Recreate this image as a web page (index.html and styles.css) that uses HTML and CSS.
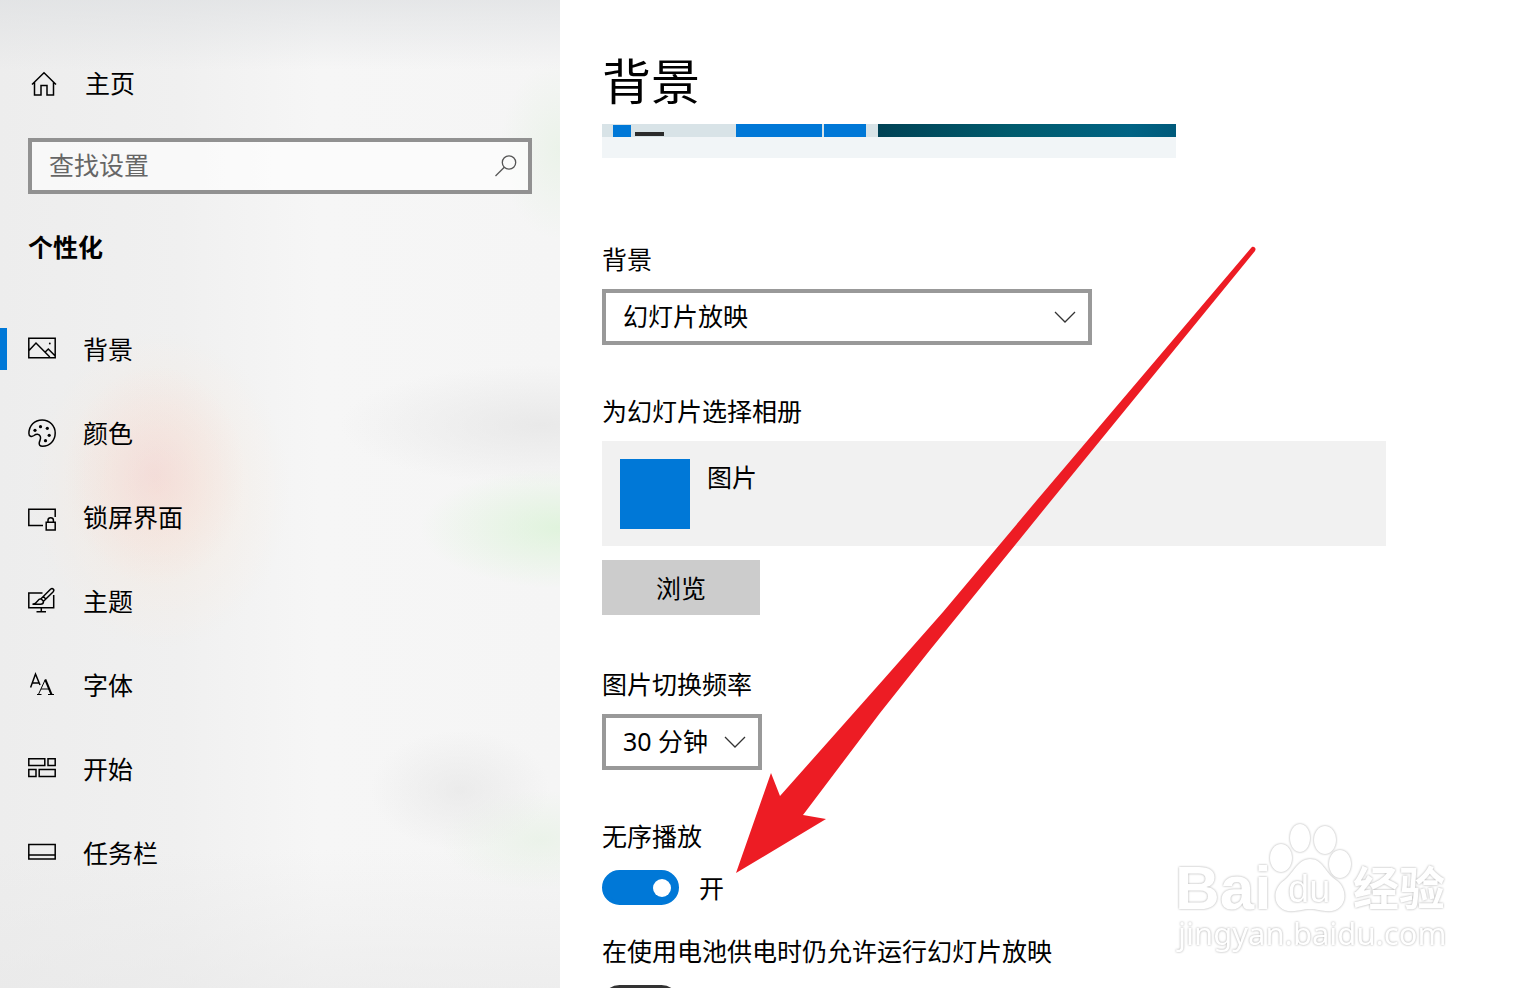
FILE: index.html
```
<!DOCTYPE html>
<html lang="zh-CN">
  <head>
    <meta charset="UTF-8" />
    <meta name="viewport" content="width=device-width, initial-scale=1.0" />
    <title>背景</title>
    <link rel="stylesheet" href="styles.css">
  </head>

  <body>
    <aside class="sidebar">
      <a class="home" href="#">
        <svg class="icon" viewBox="0 0 28 28">
          <path d="M2 15.500 14 3.700 26 15.500M4.500 13.500V26H11V16.500H17V26H23.500V13.500" />
        </svg>
        主页
      </a>

      <div class="search">
        <input type="search" placeholder="查找设置" aria-label="查找设置" />
        <svg class="search-icon" viewBox="0 0 24 24">
          <circle cx="15" cy="8.500" r="6.700" />
          <path d="M10.300 13.300 1.500 22" />
        </svg>
      </div>

      <h2>个性化</h2>

      <nav>
        <a class="item active" href="#">
          <svg class="icon" viewBox="0 0 28 28">
            <path d="M.8 3.200H27.200V22.800H.8ZM1 15.500 8 8 21.800 22M17 17.200 20.300 14 27 20.700" />
            <circle class="dot" cx="21.800" cy="8.500" r=".9" />
          </svg>
          背景
        </a>
        <a class="item" href="#">
          <svg class="icon" viewBox="0 0 28 28">
            <path d="M.9 14.500C.9 6.500 6.500 .9 14.200 .9 21.500 .9 27.200 6.700 27.200 14 27.200 21.500 21.800 27.200 14.500 27.200 11.800 27.200 10.800 25.700 11.300 23.500 12 21 13.300 19.500 12.300 17.300 11 14.700 8.300 14.700 6 16.500 3.500 18.200 .9 17.500 .9 14.500Z" />
            <circle class="dot" cx="7" cy="11.300" r="1.600" />
            <circle class="dot" cx="12.500" cy="7.700" r="1.600" />
            <circle class="dot" cx="19.300" cy="9.300" r="1.600" />
            <circle class="dot" cx="21.200" cy="16.300" r="1.600" />
            <circle class="dot" cx="17.500" cy="21.700" r="1.600" />
          </svg>
          颜色
        </a>
        <a class="item" href="#">
          <svg class="icon" viewBox="0 0 28 28">
            <path d="M15 22.500H.8V6.200H27.200V14M18.200 19.200H27.200V27H18.200ZM20 19V17C20 14 25.400 14 25.400 17V19" />
          </svg>
          锁屏界面
        </a>
        <a class="item" href="#">
          <svg class="icon" viewBox="0 0 28 28">
            <path d="M14.500 6H.8V20.800H25.700V8M13.300 21V24.800M8.500 24.800H18" />
            <path d="M13 11.700 22.500 2.300C24.500 .5 27 2.800 25 5L15.500 14.200M13 11.700C8.500 12 10.500 16.500 4.500 17.300H12.500C14.500 17.300 15.500 16 15.500 14.200ZM13 11.700 15.500 14.200M15.300 9.500 17.800 12" />
          </svg>
          主题
        </a>
        <a class="item" href="#">
          <svg class="icon" viewBox="0 0 28 28">
            <path d="M2.600 16.500 7.500 3 12 14M4.300 12H11" />
            <path class="thin" d="M10.500 23.300 17.300 8.500M13 18H21M9 23.500H13.500M20 23.500H26" />
            <path class="thick" d="M17.300 8.500 23.500 23.500" />
          </svg>
          字体
        </a>
        <a class="item" href="#">
          <svg class="icon" viewBox="0 0 28 28">
            <path d="M.8 3.700H16.800V10.500H.8ZM20 3.700H27.200V10.500H20ZM.8 14.500H8V21.500H.8ZM11.200 14.500H27.200V21.500H11.200Z" />
          </svg>
          开始
        </a>
        <a class="item" href="#">
          <svg class="icon" viewBox="0 0 28 28">
            <path d="M.8 5.500H27.200V20H.8ZM.8 16H27.200" />
          </svg>
          任务栏
        </a>
      </nav>
    </aside>

    <main class="content">
      <h1>背景</h1>

      <div class="preview">
        <div class="preview-screen">
          <span class="tile small"></span>
          <span class="line"></span>
          <span class="tile wide"></span>
          <span class="tile medium"></span>
          <span class="wallpaper"></span>
        </div>
      </div>

      <label class="label" for="background">背景</label>
      <div class="select">
        <select id="background">
          <option>幻灯片放映</option>
        </select>
        <svg class="chevron" viewBox="0 0 22 12"><path d="M1 1 11 11 21 1" /></svg>
      </div>

      <h3 class="label">为幻灯片选择相册</h3>
      <div class="album">
        <div class="album-cover"></div>
        <span>图片</span>
      </div>
      <button class="browse">浏览</button>

      <label class="label interval" for="interval">图片切换频率</label>
      <div class="select short">
        <select id="interval">
          <option>30 分钟</option>
        </select>
        <svg class="chevron" viewBox="0 0 22 12"><path d="M1 1 11 11 21 1" /></svg>
      </div>

      <label class="label" for="shuffle">无序播放</label>
      <div class="switch">
        <input type="checkbox" id="shuffle" checked />
        <span>开</span>
      </div>

      <label class="label battery" for="battery">在使用电池供电时仍允许运行幻灯片放映</label>
      <div class="switch">
        <input type="checkbox" id="battery" />
      </div>
    </main>

    <svg class="arrow" viewBox="0 0 530 640">
      <path d="M6 633 41 533 50 556 153 440 213 372 307 260 521 8C523 5 527 8 525 11L320 262 200 410 150 473 73 575 96 579Z" />
    </svg>

    <svg class="watermark" viewBox="0 0 290 150">
      <text class="brand" x="5" y="94">Bai</text>
      <ellipse cx="111" cy="43" rx="11" ry="14" />
      <ellipse cx="130" cy="23" rx="10" ry="14" />
      <ellipse cx="155" cy="25" rx="11" ry="14" />
      <ellipse cx="170" cy="49" rx="11" ry="14" />
      <path d="M140 44C153 44 155 58 166 65 178 73 178 93 162 96 152 97 148 94 140 94 132 94 128 97 118 96 103 93 102 76 112 67 124 59 127 44 140 44Z" />
      <text class="du" x="118" y="87">du</text>
      <text class="cjk" x="183" y="90">经验</text>
      <text class="site" x="8" y="130">jingyan.baidu.com</text>
    </svg>
  </body>
</html>
```
FILE: styles.css
```
* {
  box-sizing: border-box;
}

body {
  display: grid;
  grid-template-columns: 560px 1fr;
  position: relative;
  height: 100vh;
  margin: 0;
  overflow: hidden;
  background-color: white;
  color: black;
  font-family: "Noto Sans", "Noto Sans CJK SC", sans-serif;
  font-size: 25px;
  line-height: 36px;
}

h1,
h2,
h3 {
  margin: 0;
}

a {
  color: black;
  text-decoration: none;
}

input,
select,
button {
  font: inherit;
  color: black;
  border-radius: 0;
}

/* Sidebar */

.sidebar {
  padding-top: 65px;
  background:
    radial-gradient(ellipse 90px 110px at 155px 475px, rgba(240, 190, 195, 0.32), rgba(245, 205, 200, 0.2) 50%, transparent),
    radial-gradient(ellipse 130px 160px at 160px 490px, rgba(255, 228, 205, 0.4), transparent),
    radial-gradient(ellipse 140px 60px at 560px 528px, rgba(210, 242, 205, 0.6), transparent),
    radial-gradient(ellipse 200px 60px at 540px 425px, rgba(225, 225, 225, 0.6), transparent),
    radial-gradient(ellipse 90px 60px at 460px 790px, rgba(225, 225, 225, 0.5), transparent),
    radial-gradient(ellipse 100px 50px at 540px 840px, rgba(225, 240, 222, 0.5), transparent),
    radial-gradient(ellipse 60px 90px at 560px 150px, rgba(225, 240, 222, 0.5), transparent),
    linear-gradient(rgba(222, 224, 226, 0.7), transparent 70px),
    linear-gradient(transparent 850px, rgba(232, 232, 232, 0.7)),
    linear-gradient(90deg, #ededed, #f0f0f0 180px, #f6f6f6 320px, #f5f5f5);
}

.icon {
  width: 28px;
  height: 28px;
  fill: none;
  stroke: black;
  stroke-width: 1.5;
}

.dot {
  fill: black;
  stroke: none;
}

.thin {
  stroke-width: 1;
}

.thick {
  stroke-width: 2;
}

.home {
  display: flex;
  align-items: center;
  gap: 27px;
  padding-left: 30px;
}

.search {
  display: flex;
  align-items: center;
  height: 56px;
  margin: 37px 28px 35px;
  padding: 0 10px 0 17px;
  border: 4px solid #919191;
  background-color: rgba(255, 255, 255, 0.6);
}

.search input {
  flex: 1;
  min-width: 0;
  padding: 0 0 2px;
  border: none;
  outline: none;
  background: none;
}

.search input::placeholder {
  color: #666666;
}

.search-icon {
  width: 24px;
  height: 24px;
  fill: none;
  stroke: #555555;
  stroke-width: 1.3;
}

h2 {
  padding-left: 28px;
  font-size: 25px;
}

nav {
  margin-top: 42px;
}

.item {
  display: flex;
  align-items: center;
  height: 84px;
}

.item::before {
  content: "";
  width: 7px;
  height: 42px;
  margin-right: 21px;
}

.item.active::before {
  background-color: #0078d7;
}

.item .icon {
  margin-right: 27px;
}

/* Content */

.content {
  padding: 49px 42px 0;
}

h1 {
  font-size: 49px;
  font-weight: 400;
  line-height: 64px;
}

.preview {
  width: 574px;
  height: 34px;
  max-width: 100%;
  margin: 11px 0 83px;
  background-color: #f1f5f7;
}

.preview-screen {
  display: flex;
  align-items: flex-end;
  height: 13px;
  padding-left: 11px;
  background-color: #d8e3e7;
}

.tile {
  height: 13px;
  background-color: #0078d7;
}

.small {
  width: 18px;
  height: 12px;
}

.line {
  width: 29px;
  height: 4px;
  margin: 0 72px 1px 4px;
  background-color: #2b2b2b;
}

.wide {
  width: 86px;
  margin-right: 2px;
}

.medium {
  width: 42px;
  margin-right: 12px;
}

.wallpaper {
  flex: 1;
  height: 13px;
  background: linear-gradient(90deg, #004255, #005b6d 45%, #006384 85%, #005a7b);
}

.label {
  display: block;
  margin: 48px 0 12px;
  font-size: 25px;
  font-weight: 400;
}

.select {
  position: relative;
  width: 490px;
  max-width: 100%;
}

.select.short {
  width: 160px;
}

select {
  display: block;
  width: 100%;
  height: 56px;
  padding: 0 17px 2px;
  border: 4px solid #999999;
  background-color: white;
  appearance: none;
}

.chevron {
  position: absolute;
  top: 22px;
  right: 16px;
  width: 22px;
  height: 12px;
  fill: none;
  stroke: #333333;
  stroke-width: 1.3;
  pointer-events: none;
}

.album {
  display: flex;
  gap: 17px;
  width: 784px;
  max-width: 100%;
  height: 105px;
  padding: 18px;
  background-color: #f1f1f1;
}

.album-cover {
  width: 70px;
  height: 70px;
  background-color: #0078d7;
}

.browse {
  display: block;
  width: 158px;
  height: 55px;
  margin-top: 14px;
  border: none;
  background-color: #cccccc;
}

.interval {
  margin-top: 51px;
}

.battery {
  margin-top: 28px;
}

.switch {
  display: flex;
  align-items: center;
  gap: 20px;
  height: 35px;
  margin-top: 16px;
}

.switch input {
  display: flex;
  align-items: center;
  width: 77px;
  height: 35px;
  margin: 0;
  padding: 0 8px;
  border: 4px solid #333333;
  border-radius: 18px;
  appearance: none;
}

.switch input::before {
  content: "";
  width: 18px;
  height: 18px;
  border-radius: 50%;
  background-color: #333333;
}

.switch input:checked {
  justify-content: flex-end;
  padding: 0 4px;
  border-color: #0078d7;
  background-color: #0078d7;
}

.switch input:checked::before {
  background-color: white;
}

/* Drawn over the page */

.arrow {
  position: absolute;
  top: 240px;
  left: 730px;
  width: 530px;
  height: 640px;
  fill: #ed1c24;
  pointer-events: none;
}

.watermark {
  position: absolute;
  top: 815px;
  left: 1170px;
  width: 290px;
  height: 150px;
  fill: white;
  pointer-events: none;
}

.watermark > * {
  filter: drop-shadow(0 0 1px #aaaaaa);
}

.brand {
  font: bold 62px "Liberation Sans", sans-serif;
}

.du {
  font: 38px "Liberation Sans", sans-serif;
}

.cjk {
  font: bold 46px "Noto Sans CJK SC", sans-serif;
}

.site {
  font: 31px "Noto Sans", sans-serif;
}
```
